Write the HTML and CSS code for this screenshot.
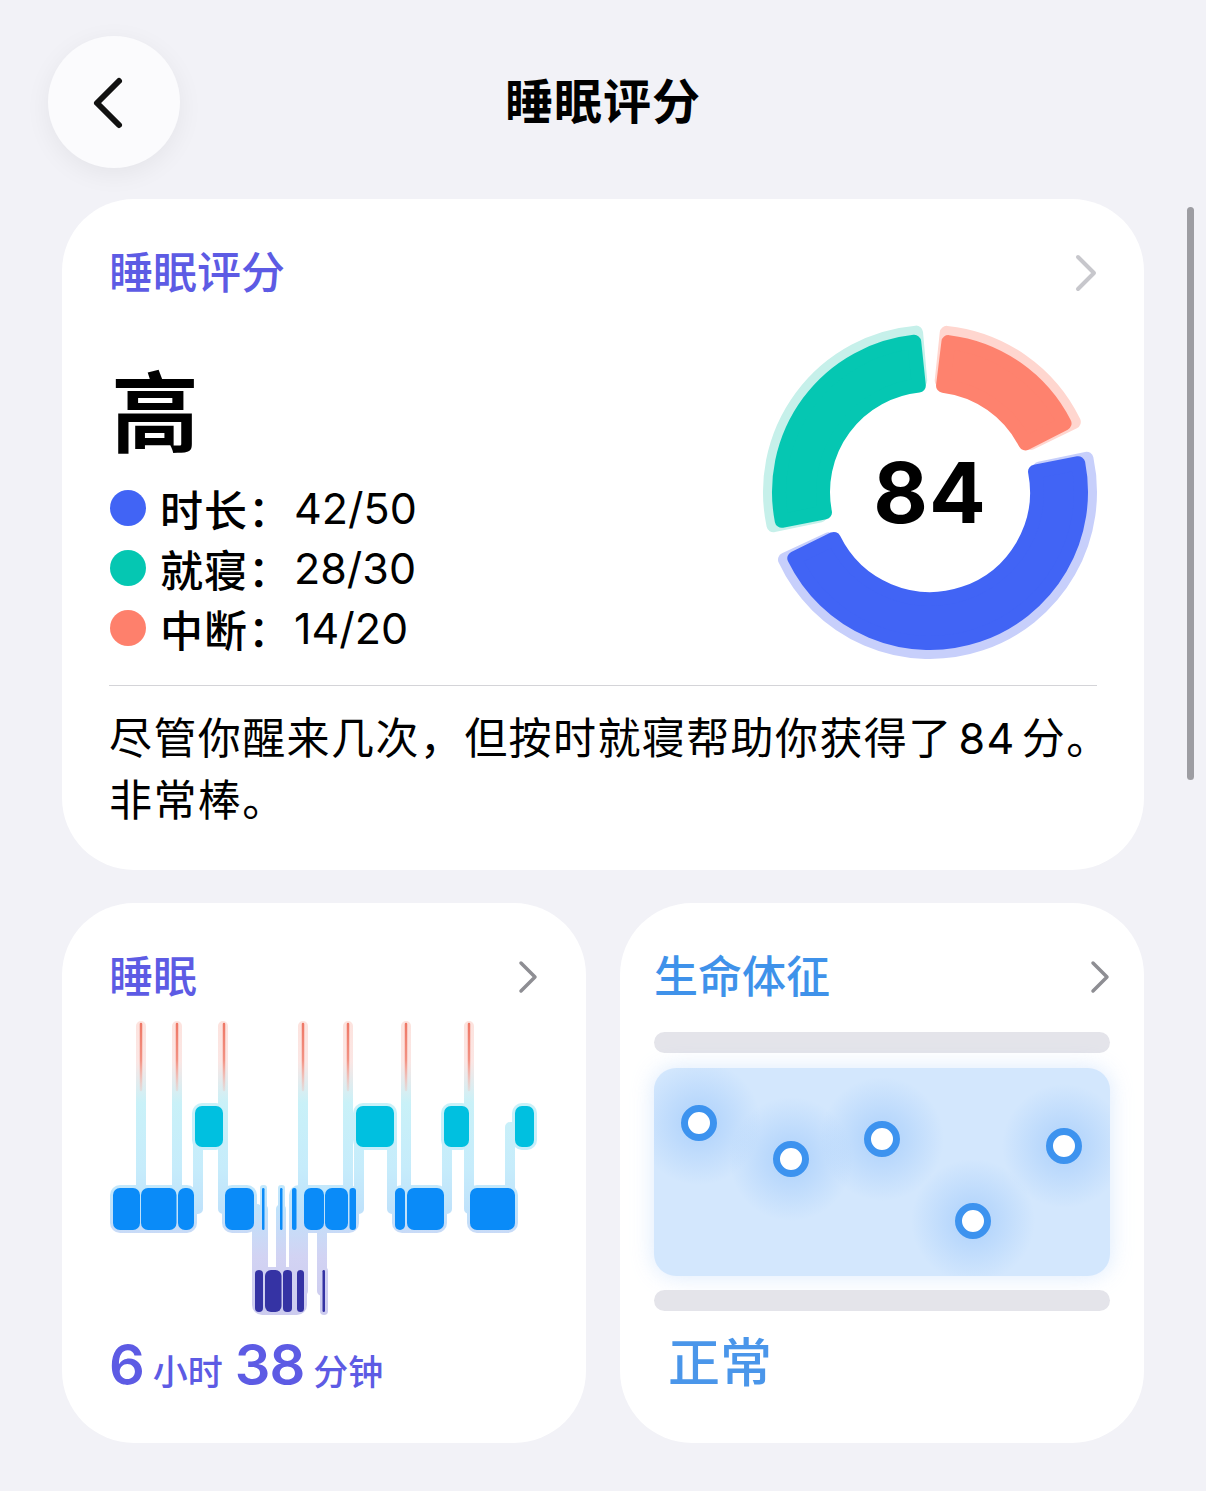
FILE: index.html
```html
<!DOCTYPE html>
<html lang="zh-CN">
<head>
  <meta charset="UTF-8">
  <title>睡眠评分</title>
  <meta name="viewport" content="width=device-width, initial-scale=1">
  <link rel="stylesheet" href="styles.css">
</head>
<body>
  <div class="scroll-indicator"></div>

  <header class="topbar">
    <button class="back-btn" type="button" aria-label="返回">
      <svg width="40" height="60" viewBox="0 0 40 60">
        <polyline points="28,9 6,31 28,53" fill="none" stroke="#111" stroke-width="6" stroke-linecap="round" stroke-linejoin="round"/>
      </svg>
    </button>
    <h1 class="page-title">睡眠评分</h1>
    <span></span>
  </header>

  <main class="content">
    <!-- Score summary -->
    <section class="card score-card">
      <div class="card-head">
        <h2 class="card-title purple">睡眠评分</h2>
        <svg class="chevron chevron-light" width="26" height="40" viewBox="0 0 26 40">
          <polyline points="5,4 21,20 5,36" fill="none" stroke-width="4" stroke-linecap="round" stroke-linejoin="round"/>
        </svg>
      </div>

      <div class="score-row">
        <div class="score-info">
          <div class="score-level">高</div>
          <ul class="legend">
            <li><span class="dot dot-blue"></span><span class="legend-label">时长：</span><span class="legend-value">42/50</span></li>
            <li><span class="dot dot-teal"></span><span class="legend-label">就寝：</span><span class="legend-value">28/30</span></li>
            <li><span class="dot dot-coral"></span><span class="legend-label">中断：</span><span class="legend-value">14/20</span></li>
          </ul>
        </div>

        <div class="donut">
          <svg width="340" height="340" viewBox="0 0 340 340" id="donutSvg"></svg>
          <div class="donut-value">84</div>
        </div>
      </div>

      <hr class="divider">
      <p class="summary"><span class="nowrap">尽管你醒来几次，但按时就寝帮助你获得了<span class="inline-num">84</span>分。</span><br>非常棒。</p>
    </section>

    <div class="tiles">
      <!-- Sleep stages -->
      <section class="card tile sleep-tile">
        <div class="card-head">
          <h2 class="card-title purple">睡眠</h2>
          <svg class="chevron" width="20" height="34" viewBox="0 0 20 34">
            <polyline points="3,3 17,17 3,31" fill="none" stroke-width="3.5" stroke-linecap="round" stroke-linejoin="round"/>
          </svg>
        </div>

        <svg class="stages" width="430" height="296" viewBox="0 0 430 296">
          <defs>
            <linearGradient id="connGrad" gradientUnits="userSpaceOnUse" x1="0" y1="0" x2="0" y2="296">
              <stop offset="0" stop-color="#fde3de"/>
              <stop offset="0.14" stop-color="#fbe6e4"/>
              <stop offset="0.28" stop-color="#c9f1f8"/>
              <stop offset="0.5" stop-color="#c6ecfb"/>
              <stop offset="0.64" stop-color="#bfe2fb"/>
              <stop offset="0.8" stop-color="#d2d3f3"/>
              <stop offset="1" stop-color="#cccbee"/>
            </linearGradient>
            <linearGradient id="awakeGrad" gradientUnits="userSpaceOnUse" x1="0" y1="0" x2="0" y2="80">
              <stop offset="0" stop-color="#ee7563"/>
              <stop offset="0.5" stop-color="#f29283"/>
              <stop offset="1" stop-color="#f7b9ae" stop-opacity="0"/>
            </linearGradient>
          </defs>

          <!-- stage path between blocks -->
          <path d="M10,189 H31 V6 V189 H67 V6 V189 H88 V107 H113 V6 V189 H147 V271 H153 V189 V271 H171 V189 V271 H184 V189 V271 H193 V6 V189 H212 V271 V189 H238 V6 V189 H249 V107 H282 V189 H296 V6 V189 H337 V107 H359 V6 V189 H400 V107 H420"
                fill="none" stroke="url(#connGrad)" stroke-width="10" stroke-linejoin="round" stroke-linecap="round"/>

          <!-- awake marks -->
          <g stroke="url(#awakeGrad)" stroke-width="2.5" stroke-linecap="round">
            <line x1="31" y1="4" x2="31" y2="70"/>
            <line x1="67" y1="4" x2="67" y2="70"/>
            <line x1="114" y1="4" x2="114" y2="70"/>
            <line x1="193" y1="4" x2="193" y2="70"/>
            <line x1="238" y1="4" x2="238" y2="70"/>
            <line x1="296" y1="4" x2="296" y2="70"/>
            <line x1="359" y1="4" x2="359" y2="70"/>
          </g>

          <!-- halos -->
          <g fill="url(#connGrad)">
            <rect x="0" y="165" width="87" height="48" rx="10"/>
            <rect x="112" y="165" width="35" height="48" rx="10"/>
            <rect x="150" y="165" width="7" height="48" rx="3"/>
            <rect x="168" y="165" width="7" height="48" rx="3"/>
            <rect x="179" y="165" width="70" height="48" rx="10"/>
            <rect x="282" y="165" width="55" height="48" rx="10"/>
            <rect x="357" y="165" width="51" height="48" rx="10"/>
            <rect x="82" y="83" width="34" height="47" rx="10"/>
            <rect x="243" y="83" width="44" height="47" rx="10"/>
            <rect x="331" y="83" width="31" height="47" rx="10"/>
            <rect x="402" y="83" width="25" height="47" rx="10"/>
            <rect x="142" y="247" width="55" height="48" rx="10"/>
            <rect x="210" y="247" width="8" height="48" rx="4"/>
          </g>

          <!-- core -->
          <g fill="#0a8bf8">
            <rect x="3" y="168" width="27" height="42" rx="7"/>
            <rect x="31" y="168" width="35.5" height="42" rx="7"/>
            <rect x="68" y="168" width="16" height="42" rx="7"/>
            <rect x="115" y="168" width="29" height="42" rx="7"/>
            <rect x="152" y="168" width="2.5" height="42" rx="1.2"/>
            <rect x="170" y="168" width="2.5" height="42" rx="1.2"/>
            <rect x="182" y="168" width="4.5" height="42" rx="2"/>
            <rect x="194" y="168" width="20" height="42" rx="7"/>
            <rect x="215" y="168" width="23" height="42" rx="7"/>
            <rect x="239.5" y="168" width="6.5" height="42" rx="3"/>
            <rect x="285" y="168" width="10" height="42" rx="5"/>
            <rect x="297" y="168" width="37" height="42" rx="7"/>
            <rect x="360" y="168" width="45" height="42" rx="7"/>
          </g>

          <!-- REM -->
          <g fill="#00c0e0">
            <rect x="85" y="86" width="28" height="41" rx="7"/>
            <rect x="246" y="86" width="38" height="41" rx="7"/>
            <rect x="334" y="86" width="25" height="41" rx="7"/>
            <rect x="405" y="86" width="19" height="41" rx="7"/>
          </g>

          <!-- deep -->
          <g fill="#3533a4">
            <rect x="145" y="250" width="8" height="42" rx="4"/>
            <rect x="155" y="250" width="16.5" height="42" rx="6"/>
            <rect x="173" y="250" width="9" height="42" rx="4"/>
            <rect x="187" y="250" width="7" height="42" rx="3.5"/>
            <rect x="212.5" y="250" width="2.5" height="42" rx="1.2"/>
          </g>
        </svg>

        <div class="duration">
          <span class="num">6</span><span class="unit">小时</span><span class="num">38</span><span class="unit">分钟</span>
        </div>
      </section>

      <!-- Vitals -->
      <section class="card tile vitals-tile">
        <div class="card-head">
          <h2 class="card-title blue">生命体征</h2>
          <svg class="chevron" width="20" height="34" viewBox="0 0 20 34">
            <polyline points="3,3 17,17 3,31" fill="none" stroke-width="3.5" stroke-linecap="round" stroke-linejoin="round"/>
          </svg>
        </div>

        <div class="range-bar"></div>
        <div class="vitals-box">
          <svg width="456" height="208" viewBox="0 0 456 208">
            <defs>
              <radialGradient id="glow">
                <stop offset="0" stop-color="#a6cdfb" stop-opacity="0.85"/>
                <stop offset="1" stop-color="#a6cdfb" stop-opacity="0"/>
              </radialGradient>
            </defs>
            <g fill="url(#glow)">
              <circle cx="45" cy="55" r="62"/>
              <circle cx="137" cy="91" r="62"/>
              <circle cx="228" cy="71" r="62"/>
              <circle cx="319" cy="153" r="62"/>
              <circle cx="410" cy="78" r="62"/>
            </g>
            <g fill="#fff" stroke="#3d93ef" stroke-width="7">
              <circle cx="45" cy="55" r="14.5"/>
              <circle cx="137" cy="91" r="14.5"/>
              <circle cx="228" cy="71" r="14.5"/>
              <circle cx="319" cy="153" r="14.5"/>
              <circle cx="410" cy="78" r="14.5"/>
            </g>
          </svg>
        </div>
        <div class="range-bar"></div>

        <div class="vitals-status">正常</div>
      </section>
    </div>
  </main>

  <script>
    // Donut segments: duration / bedtime / interruptions
    const segments = [
      { from: 79, to: 244, color: "#4164f5", halo: "#c7cffb" },
      { from: 259, to: 354, color: "#05c7b2", halo: "#c6f0ea" },
      { from: 7, to: 63, color: "#fe826e", halo: "#ffd6cf" }
    ];

    function polar(r, deg) {
      const a = (deg - 90) * Math.PI / 180;
      return [170 + r * Math.cos(a), 170 + r * Math.sin(a)];
    }

    function sector(r0, r1, a0, a1) {
      const large = a1 - a0 > 180 ? 1 : 0;
      const p0 = polar(r1, a0), p1 = polar(r1, a1);
      const p2 = polar(r0, a1), p3 = polar(r0, a0);
      return `M${p0[0]} ${p0[1]} A${r1} ${r1} 0 ${large} 1 ${p1[0]} ${p1[1]} ` +
             `L${p2[0]} ${p2[1]} A${r0} ${r0} 0 ${large} 0 ${p3[0]} ${p3[1]} Z`;
    }

    const svg = document.getElementById("donutSvg");
    let markup = "";
    segments.forEach(s => {
      markup += `<path d="${sector(112, 160, s.from - 1, s.to + 1)}" fill="${s.halo}" stroke="${s.halo}" stroke-width="14" stroke-linejoin="round"/>`;
    });
    segments.forEach(s => {
      markup += `<path d="${sector(107, 151, s.from, s.to)}" fill="${s.color}" stroke="${s.color}" stroke-width="14" stroke-linejoin="round"/>`;
    });
    svg.innerHTML = markup;
  </script>
</body>
</html>
```

FILE: styles.css
```css
:root {
  --page-bg: #f2f2f7;
  --purple: #5d5be4;
  --blue: #3f92ea;
  --grey-bar: #e4e4ea;
  --chevron: #8e8e93;
}
* {
  box-sizing: border-box;
}
body {
  font-family: Inter, "Noto Sans CJK SC", sans-serif;
  background: var(--page-bg);
  color: #000;
  margin: 0;
  width: 1206px;
  min-height: 1491px;
  position: relative;
}
h1, h2, p, ul {
  margin: 0;
  padding: 0;
}

.scroll-indicator {
  position: absolute;
  top: 207px;
  left: 1187px;
  width: 7px;
  height: 573px;
  border-radius: 4px;
  background: #9d9da2;
}

/* top bar */
.topbar {
  display: grid;
  grid-template-columns: 1fr auto 1fr;
  align-items: center;
  padding-top: 36px;
  height: 168px;
}
.back-btn {
  width: 132px;
  height: 132px;
  margin-left: 48px;
  border: none;
  border-radius: 50%;
  background: #fbfbfd;
  box-shadow: 0 6px 26px rgba(0, 0, 0, 0.06);
  display: flex;
  align-items: center;
  justify-content: center;
  padding: 0 6px 0 0;
}
.page-title {
  font-size: 48px;
  font-weight: 700;
  line-height: 64px;
  letter-spacing: 1px;
}

/* cards */
.content {
  padding: 31px 62px 0;
}
.card {
  background: #fff;
  border-radius: 72px;
}
.card-head {
  display: flex;
  justify-content: space-between;
  align-items: center;
  height: 56px;
}
.card-title {
  font-size: 44px;
  font-weight: 500;
  line-height: 56px;
}
.purple { color: var(--purple); }
.blue { color: var(--blue); }
.chevron {
  stroke: var(--chevron);
}
.chevron-light {
  stroke: #c7c7cc;
  margin-right: -2px;
}

.score-card {
  padding: 46px 47px 39px;
}
.score-row {
  display: flex;
  justify-content: space-between;
  margin-top: 21px;
}
.score-info {
  padding-top: 47px;
}
.score-level {
  font-size: 88px;
  font-weight: 700;
  line-height: 88px;
  margin-left: 2px;
}
.legend {
  list-style: none;
  margin-top: 21px;
}
.legend li {
  display: flex;
  align-items: center;
  height: 60px;
  font-size: 43px;
}
.dot {
  width: 36px;
  height: 36px;
  border-radius: 50%;
  margin: 0 14px 0 1px;
}
.dot-blue { background: #4164f5; }
.dot-teal { background: #05c7b2; }
.dot-coral { background: #fe806c; }
.legend-label {
  font-weight: 500;
  letter-spacing: 1px;
}
.legend-value {
  margin-left: 2px;
  font-weight: 400;
}

.donut {
  position: relative;
  width: 340px;
  height: 340px;
  margin-right: -3px;
}
.donut svg {
  display: block;
}
.donut-value {
  position: absolute;
  inset: 0;
  display: flex;
  align-items: center;
  justify-content: center;
  font-size: 84px;
  font-weight: 700;
  letter-spacing: 1px;
}

.divider {
  border: none;
  height: 1px;
  background: #d4d4d8;
  margin: 23px 0 0;
}
.summary {
  margin-top: 21px;
  font-size: 43px;
  line-height: 62px;
  letter-spacing: 1.4px;
}
.nowrap {
  white-space: nowrap;
}
.inline-num {
  margin: 0 6px;
}

/* bottom tiles */
.tiles {
  display: grid;
  grid-template-columns: minmax(0, 1fr) minmax(0, 1fr);
  gap: 34px;
  margin-top: 33px;
}
.sleep-tile {
  padding: 46px 48px 36px 47px;
}
.vitals-tile {
  padding: 46px 34px 48px 34px;
}
.stages {
  display: block;
  margin: 15px 0 0 1px;
}
.duration {
  margin-top: 21px;
  height: 70px;
  line-height: 70px;
  color: var(--purple);
  white-space: nowrap;
}
.duration span {
  line-height: 1;
}
.duration .num {
  font-size: 56px;
  font-weight: 600;
  letter-spacing: -1px;
}
.duration .unit {
  font-size: 35px;
  font-weight: 500;
  margin: 0 12px 0 9px;
}

.range-bar {
  height: 21px;
  border-radius: 11px;
  background: var(--grey-bar);
  margin-top: 14px;
}
.vitals-tile .card-head + .range-bar {
  margin-top: 27px;
}
.vitals-box {
  margin-top: 15px;
  height: 208px;
  border-radius: 22px;
  background: #d3e7fd;
  overflow: hidden;
  box-shadow: 0 0 22px rgba(175, 208, 250, 0.45);
}
.vitals-box svg {
  display: block;
}
.vitals-status {
  margin-top: 22px;
  padding-left: 14px;
  font-size: 52px;
  font-weight: 500;
  line-height: 62px;
  color: #4a96ea;
}
```
